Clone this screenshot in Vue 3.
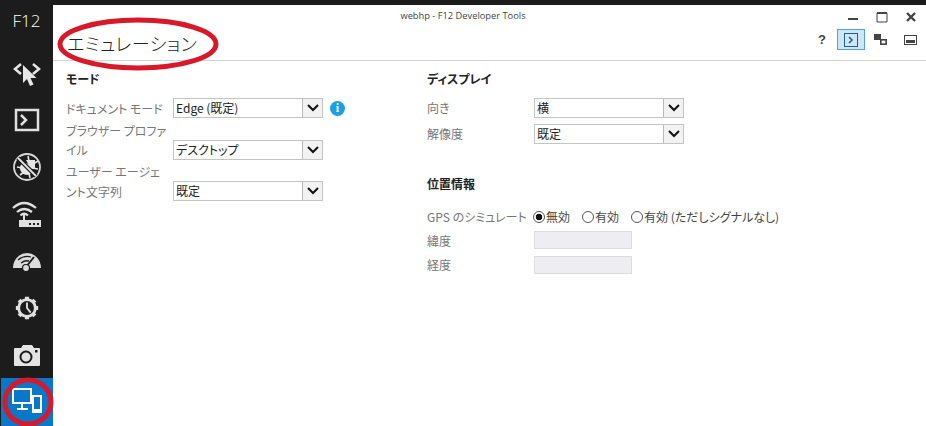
<script setup>
const modeRows = [
  { label: 'ドキュメント モード', value: 'Edge (既定)', info: true },
  { label: 'ブラウザー プロファイル', value: 'デスクトップ' },
  { label: 'ユーザー エージェント文字列', value: '既定' },
]
const displayRows = [
  { label: '向き', value: '横' },
  { label: '解像度', value: '既定' },
]
const gpsOptions = [
  { label: '無効', checked: true },
  { label: '有効', checked: false },
  { label: '有効 (ただしシグナルなし)', checked: false },
]
</script>

<template>
  <div class="window">
    <div class="topline"></div>
    <div class="body">
      <nav class="sidebar">
        <div class="f12">F12</div>
        <div class="tool">
          <svg width="36" height="28" viewBox="0 0 36 28">
            <path d="M12 5 6 10l6 5M24 5l6 5-6 5" fill="none" stroke="#e6e6e6" stroke-width="2.500" />
            <path d="M14 6v18l4-4 3 7 3.500-1.500-3-6.500h6z" fill="#e6e6e6" />
          </svg>
        </div>
        <div class="tool">
          <svg width="26" height="24" viewBox="0 0 26 24">
            <rect x="2" y="2" width="22" height="20" fill="none" stroke="#e0e0e0" stroke-width="2.500" />
            <path d="m7 7 5 5-5 5" fill="none" stroke="#e0e0e0" stroke-width="2.500" />
          </svg>
        </div>
        <div class="tool">
          <svg width="30" height="30" viewBox="0 0 30 30">
            <circle cx="15" cy="15" r="13" fill="none" stroke="#d8d8d8" stroke-width="1.800" />
            <ellipse cx="14" cy="17" rx="6.500" ry="5.500" fill="#e6e6e6" transform="rotate(40 14 17)" />
            <path d="M14 8h9v8l-4 1z" fill="#e6e6e6" />
            <path d="m5 15 5 1M8 23l4-3M16 4l1 5M26 9l-5 3M26 17l-6-1M18 26l-1-5" stroke="#e6e6e6" stroke-width="1.600" />
            <path d="M6 6 24 24" stroke="#1c1c1c" stroke-width="4.500" />
            <path d="M6 6 24 24" stroke="#e6e6e6" stroke-width="1.800" />
          </svg>
        </div>
        <div class="tool">
          <svg width="30" height="28" viewBox="0 0 30 28">
            <path d="M1 8Q12-2 24 8M5 12Q12 6 20 12M8.500 15.500Q12 12 16 15.500" fill="none" stroke="#e0e0e0" stroke-width="2.200" />
            <path d="M12 15v6" stroke="#e0e0e0" stroke-width="2" />
            <path d="M7 20h22v7H7z" fill="#e0e0e0" />
            <path d="M17 23h2v2h-2zM21 23h2v2h-2zM25 23h2v2h-2z" fill="#1c1c1c" />
          </svg>
        </div>
        <div class="tool">
          <svg width="30" height="22" viewBox="0 0 30 22">
            <path d="M1 18a14 15 0 0 1 28 0z" fill="#dcdcdc" />
            <path d="M6 10q6-5 13-3M9 13q4-3 8-2" fill="none" stroke="#1c1c1c" stroke-width="1.300" />
            <path d="m14 17 8-10" stroke="#1c1c1c" stroke-width="2" />
            <circle cx="14" cy="18" r="3.500" fill="#dcdcdc" stroke="#1c1c1c" stroke-width="1.200" />
          </svg>
        </div>
        <div class="tool">
          <svg width="26" height="26" viewBox="0 0 28 28">
            <circle cx="14" cy="14" r="9" fill="none" stroke="#e0e0e0" stroke-width="3" />
            <path d="M14 2v3M14 23v3M2 14h3M23 14h3M5.500 5.500l2 2M20.500 20.500l2 2M5.500 22.500l2-2M20.500 7.500l2-2" stroke="#e0e0e0" stroke-width="4.500" />
            <path d="M14 8v6l4 5" fill="none" stroke="#e0e0e0" stroke-width="2" />
          </svg>
        </div>
        <div class="tool">
          <svg width="28" height="24" viewBox="0 0 28 24">
            <path d="M2 5h6l2-3h9l2 3h5a1 1 0 0 1 1 1v16a1 1 0 0 1-1 1H2a1 1 0 0 1-1-1V6a1 1 0 0 1 1-1z" fill="#e4e4e4" />
            <circle cx="13" cy="14" r="5.500" fill="none" stroke="#1c1c1c" stroke-width="2" />
            <rect x="22" y="7" width="2.500" height="2.500" fill="#1c1c1c" />
          </svg>
        </div>
        <div class="tool active">
          <svg width="34" height="30" viewBox="0 0 34 30">
            <rect x="3" y="2" width="18" height="14" fill="none" stroke="#fff" stroke-width="2" />
            <path d="M12 17v4M7 22h11" stroke="#fff" stroke-width="2" />
            <rect x="23" y="9" width="8" height="16" fill="#0a78c8" stroke="#fff" stroke-width="2" />
            <rect x="23" y="22" width="8" height="3" fill="#fff" />
          </svg>
        </div>
      </nav>

      <main class="main">
        <div class="titlebar">webhp - F12 Developer Tools</div>
        <div class="window-controls">
          <svg width="12" height="12" viewBox="0 0 12 12"><path d="M1 8h10" stroke="#444" stroke-width="2" /></svg>
          <svg width="12" height="12" viewBox="0 0 12 12"><path d="M1 2h10v9H1z" fill="none" stroke="#444" /><path d="M1 2h10" stroke="#444" stroke-width="2" /></svg>
          <svg width="12" height="12" viewBox="0 0 12 12"><path d="m2 2 8 8M10 2l-8 8" stroke="#444" stroke-width="2.400" /></svg>
        </div>

        <header class="header">
          <h1 class="title">エミュレーション</h1>
          <div class="actions">
            <span class="help">?</span>
            <span class="console-btn">
              <svg width="14" height="14" viewBox="0 0 14 14">
                <rect x="0.500" y="0.500" width="13" height="13" fill="none" stroke="#1f5f8f" />
                <path d="m5 4 3 3-3 3" fill="none" stroke="#1f5f8f" stroke-width="1.500" />
              </svg>
            </span>
            <svg class="dock-icon" width="13" height="11" viewBox="0 0 13 11">
              <rect x="0" y="0" width="7" height="6" fill="#444" />
              <rect x="6.800" y="5.800" width="5.400" height="4.400" fill="none" stroke="#444" stroke-width="1.600" />
            </svg>
            <svg class="dock-icon" width="13" height="10" viewBox="0 0 13 10">
              <rect x="0.500" y="0.500" width="12" height="9" fill="none" stroke="#444" />
              <rect x="2" y="5" width="9" height="3" fill="#444" />
            </svg>
          </div>
        </header>

        <div class="columns">
          <section class="col col-mode">
            <h2 class="heading">モード</h2>
            <div class="mode-grid">
              <template v-for="row in modeRows" :key="row.label">
                <label class="field-label">{{ row.label }}</label>
                <div class="field">
                  <div class="select">
                    <span class="select-value">{{ row.value }}</span>
                    <span class="select-btn">
                      <svg width="12" height="8" viewBox="0 0 12 8"><path d="m1 1 5 5 5-5" fill="none" stroke="#111" stroke-width="2" /></svg>
                    </span>
                  </div>
                  <span v-if="row.info" class="info">i</span>
                </div>
              </template>
            </div>
          </section>

          <section class="col col-display">
            <h2 class="heading">ディスプレイ</h2>
            <div class="display-grid">
              <template v-for="row in displayRows" :key="row.label">
                <label class="field-label">{{ row.label }}</label>
                <div class="select">
                  <span class="select-value">{{ row.value }}</span>
                  <span class="select-btn">
                    <svg width="12" height="8" viewBox="0 0 12 8"><path d="m1 1 5 5 5-5" fill="none" stroke="#111" stroke-width="2" /></svg>
                  </span>
                </div>
              </template>
            </div>

            <h2 class="heading geo">位置情報</h2>
            <div class="gps-row">
              <label class="field-label gps-label">GPS のシミュレート</label>
              <div class="radios">
                <span v-for="opt in gpsOptions" :key="opt.label" class="radio-item">
                  <span class="radio" :class="{ checked: opt.checked }"></span>{{ opt.label }}
                </span>
              </div>
            </div>
            <div class="geo-grid">
              <label class="field-label">緯度</label>
              <div class="geo-input"></div>
              <label class="field-label">経度</label>
              <div class="geo-input"></div>
            </div>
          </section>
        </div>
      </main>
    </div>

    <!-- red marker circles drawn over the screenshot -->
    <svg class="marker" width="926" height="426" viewBox="0 0 926 426">
      <ellipse cx="138" cy="44" rx="78" ry="24" fill="none" stroke="#d9182a" stroke-width="5" />
      <ellipse cx="28" cy="402" rx="23" ry="22" fill="none" stroke="#d9182a" stroke-width="5" />
    </svg>
  </div>
</template>

<style>
html,
body {
  margin: 0;
  background: #fff;
}
</style>

<style scoped>
.window {
  position: relative;
  width: 926px;
  height: 426px;
  overflow: hidden;
  background: #fff;
  font-family: "Noto Sans CJK JP", "Liberation Sans", sans-serif;
  font-size: 12px;
  font-feature-settings: "palt";
  color: #222;
}

.topline {
  height: 5px;
  background: #1c1c1c;
}

.body {
  display: flex;
  height: 421px;
}

.sidebar {
  width: 53px;
  flex: none;
  background: #1c1c1c;
  display: flex;
  flex-direction: column;
  align-items: stretch;
}

.f12 {
  height: 44px;
  padding-top: 1px;
  box-sizing: border-box;
  text-align: center;
  color: #fff;
  font-family: "Open Sans", sans-serif;
  font-weight: 300;
  font-size: 17px;
  line-height: 30px;
}

.tool {
  height: 47px;
  display: flex;
  align-items: center;
  justify-content: center;
}

.tool.active {
  height: 48px;
  margin-left: 1px;
  background: #0a78c8;
}

.main {
  position: relative;
  flex: 1;
  min-width: 0;
}

.titlebar {
  height: 21px;
  padding-right: 53px;
  text-align: center;
  font-family: "Open Sans", sans-serif;
  font-size: 9.300px;
  line-height: 21px;
  color: #444;
}

.window-controls {
  position: absolute;
  top: 6px;
  right: 9px;
  display: flex;
  gap: 17px;
}

.header {
  height: 34px;
  border-bottom: 1px solid #d4d4d4;
  display: flex;
  align-items: center;
  justify-content: space-between;
  padding: 0 9px 0 14px;
}

.title {
  margin: 0;
  font-size: 18px;
  font-weight: 300;
  line-height: 30px;
  color: #222;
  letter-spacing: 0.500px;
}

.actions {
  display: flex;
  align-items: center;
  padding-bottom: 7px;
}

.help {
  width: 14px;
  margin-right: 8px;
  text-align: center;
  font-family: "Liberation Sans", sans-serif;
  font-weight: 700;
  font-size: 13px;
  color: #444;
}

.console-btn {
  width: 28px;
  height: 21px;
  box-sizing: border-box;
  display: flex;
  align-items: center;
  justify-content: center;
  background: #cfe6f8;
  border: 1px solid #5aa0d0;
}

.dock-icon {
  margin-left: 9px;
}

.dock-icon + .dock-icon {
  margin-left: 17px;
}

.columns {
  display: flex;
  padding-left: 13px;
}

.col-mode {
  width: 361px;
  flex: none;
}

.heading {
  margin: 0;
  font-size: 12px;
  font-weight: 700;
  line-height: 18px;
  color: #222;
}

.col .heading:first-child {
  margin-top: 9px;
}

.mode-grid {
  margin-top: 10px;
  display: grid;
  grid-template-columns: 107px auto;
  row-gap: 2.500px;
  align-items: end;
}

.field-label {
  color: #777;
  font-size: 12px;
  line-height: 19.500px;
}

.mode-grid .field-label {
  width: 101px;
}

.field {
  display: flex;
  align-items: center;
  gap: 7px;
}

.select {
  width: 150px;
  height: 20px;
  box-sizing: border-box;
  display: flex;
  align-items: stretch;
  border: 1px solid #c4c4c4;
  background: #fff;
}

.select-value {
  flex: 1;
  padding-left: 2px;
  line-height: 18px;
  font-size: 12px;
  color: #222;
}

.select-btn {
  width: 19px;
  display: flex;
  align-items: center;
  justify-content: center;
  background: #f2f2f2;
  border-left: 1px solid #bbb;
}

.info {
  width: 15px;
  height: 15px;
  border-radius: 50%;
  background: #1ba1e2;
  color: #fff;
  font-family: "Liberation Serif", serif;
  font-weight: 700;
  font-size: 12px;
  line-height: 15px;
  text-align: center;
}

.display-grid {
  margin-top: 10px;
  display: grid;
  grid-template-columns: 107px 150px;
  row-gap: 6px;
  align-items: center;
}

.heading.geo {
  margin-top: 31px;
}

.gps-row {
  margin-top: 14px;
  display: flex;
  align-items: center;
}

.gps-label {
  width: 106px;
  white-space: nowrap;
}

.radios {
  display: flex;
  gap: 12px;
  color: #444;
}

.radio-item {
  display: flex;
  align-items: center;
  line-height: 19px;
}

.radio {
  width: 12px;
  height: 12px;
  box-sizing: border-box;
  margin-right: 1px;
  border: 1px solid #555;
  border-radius: 50%;
  background: #fff;
}

.radio.checked {
  background: radial-gradient(circle, #111 0 3px, #fff 3.600px);
}

.geo-grid {
  margin-top: 4px;
  display: grid;
  grid-template-columns: 107px 98px;
  row-gap: 5px;
  align-items: center;
}

.geo-input {
  height: 18px;
  background: #eeeef2;
  border: 1px solid #dcdcdc;
  box-sizing: border-box;
}

.marker {
  position: absolute;
  top: 0;
  left: 0;
  pointer-events: none;
}
</style>
